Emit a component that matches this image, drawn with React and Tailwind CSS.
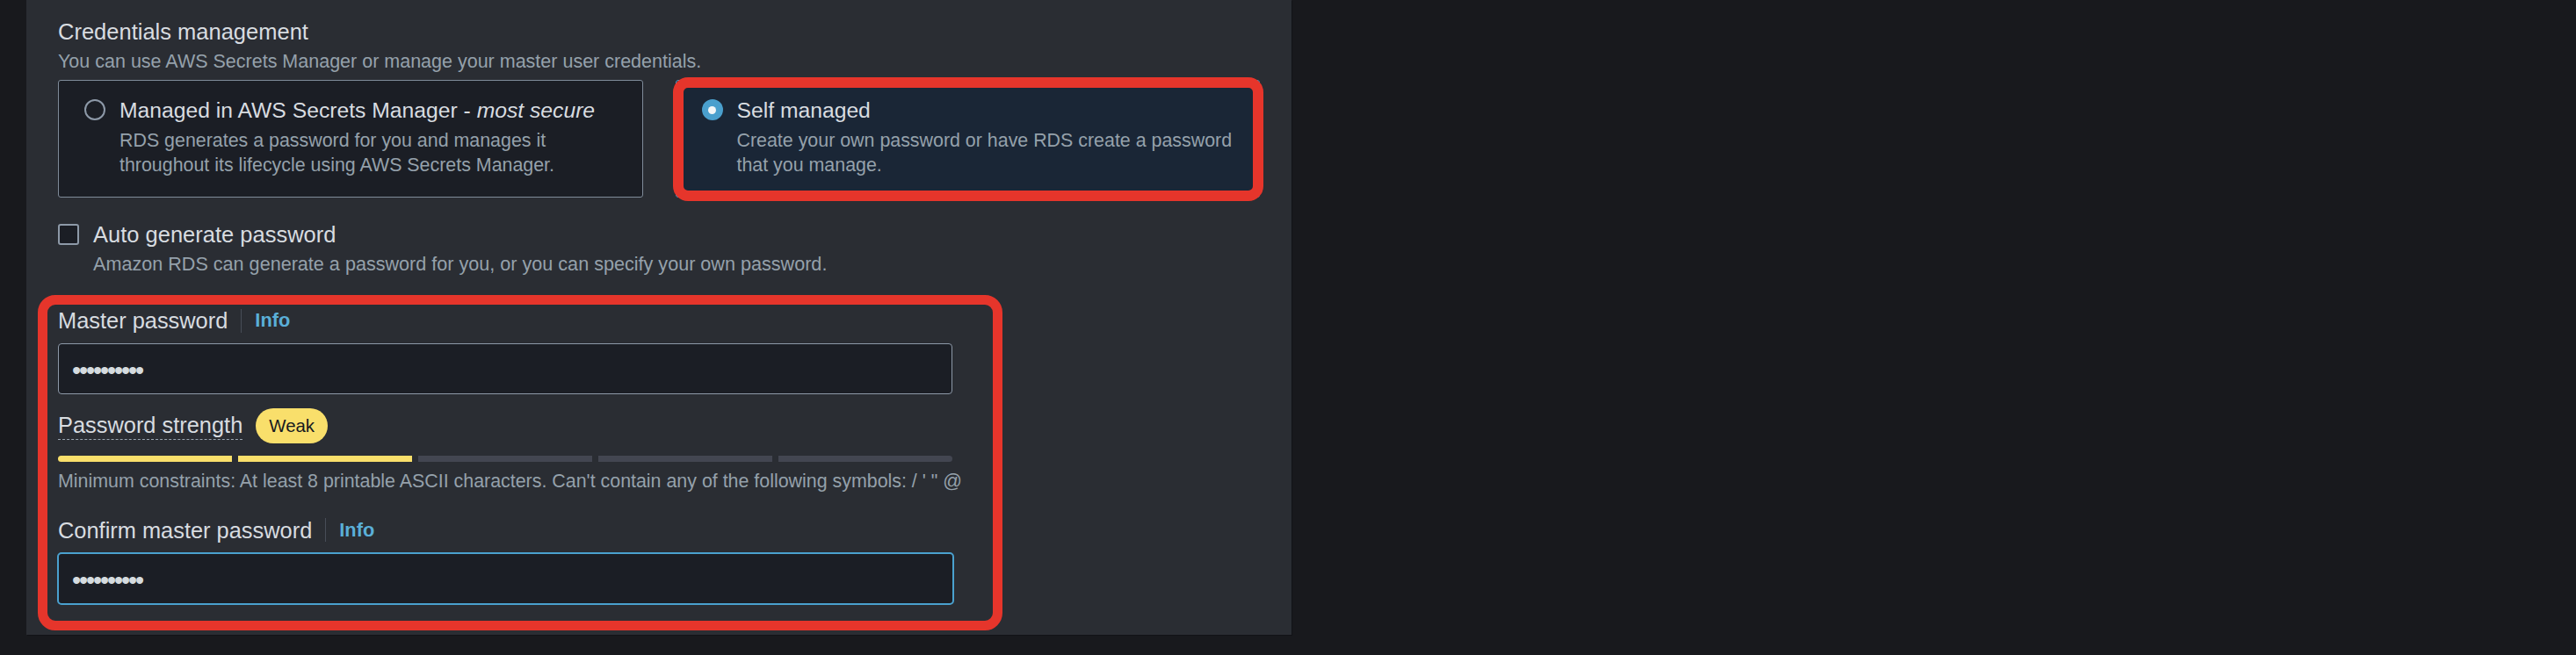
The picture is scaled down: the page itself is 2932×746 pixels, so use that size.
import React from 'react'

// Credentials management — RDS "Self managed" password section (dark theme)

const LABEL = 'text-[#d8dce0]'
const MUTED = 'text-[#95a1ab]'

function Radio({ checked }) {
  if (checked) {
    return (
      <span className="mt-[3px] flex h-[24px] w-[24px] shrink-0 items-center justify-center rounded-full bg-[#4a9fcd]">
        <span className="h-[9px] w-[9px] rounded-full bg-[#f4f6f7]" />
      </span>
    )
  }
  return <span className="mt-[3px] h-[24px] w-[24px] shrink-0 rounded-full border-2 border-[#8d99a8]" />
}

function Tile({ selected, title, description }) {
  return (
    <div
      className={`relative flex gap-[16px] rounded-[3px] border pl-[29px] pr-[16px] pt-[18.5px] pb-[22px] ${
        selected ? 'border-[#4a9fcd] bg-[#1a2636]' : 'border-[#7f8b99] bg-[#1b1e25]'
      }`}
    >
      <Radio checked={selected} />
      <div className="min-w-0">
        <div className={`text-[24.7px] leading-[32px] ${LABEL}`}>{title}</div>
        <p className={`mt-[4.7px] text-[21.4px] leading-[27.4px] ${MUTED}`}>{description}</p>
      </div>
      {selected && (
        // annotation outline drawn over the selected tile
        <span className="pointer-events-none absolute -top-[4px] -left-[4px] -right-[5px] -bottom-[5px] rounded-[17px] border-[12px] border-[#e6352b]" />
      )}
    </div>
  )
}

function FieldLabel({ children, className = '' }) {
  return (
    <div className={`flex h-[32px] items-center ${className}`}>
      <span className={`text-[25.4px] leading-[32px] ${LABEL}`}>{children}</span>
      <span className="mx-[15px] h-[27px] w-px bg-[#474d57]" />
      <span className="text-[21.8px] font-bold leading-[32px] text-[#5aafd8]">Info</span>
    </div>
  )
}

function Dots() {
  return (
    <span className="pt-[5px] text-[29px] leading-none tracking-[-2.15px] text-[#d5dbdf]">••••••••••</span>
  )
}

const BARS = [true, true, false, false, false]

export default function App() {
  return (
    <div className="h-[746px] w-[2932px] bg-[#18191d] font-['Liberation_Sans',Arial,sans-serif]">
      <section className="ml-[30px] w-[1440px] bg-[#2a2d33] px-[36px] pt-[19.5px] pb-[34px] shadow-[1px_1px_0_#111216]">
        <h2 className={`text-[25.5px] leading-[32px] ${LABEL}`}>Credentials management</h2>
        <p className={`mt-[4.8px] text-[21.5px] leading-[28px] ${MUTED}`}>
          You can use AWS Secrets Manager or manage your master user credentials.
        </p>

        <div className="mt-[6.7px] grid grid-cols-2 gap-[37px]">
          <Tile
            title={
              <>
                Managed in AWS Secrets Manager - <i>most secure</i>
              </>
            }
            description="RDS generates a password for you and manages it throughout its lifecycle using AWS Secrets Manager."
          />
          <Tile
            selected
            title="Self managed"
            description="Create your own password or have RDS create a password that you manage."
          />
        </div>

        {/* auto generate */}
        <div className="mt-[26.5px] flex gap-[16px]">
          <span className="mt-[3.5px] h-[24px] w-[24px] shrink-0 rounded-[3px] border-2 border-[#8d99a8] bg-[#1b1e25]" />
          <div>
            <div className={`text-[25.5px] leading-[32px] ${LABEL}`}>Auto generate password</div>
            <p className={`mt-[3.5px] text-[21.6px] leading-[27.4px] ${MUTED}`}>
              Amazon RDS can generate a password for you, or you can specify your own password.
            </p>
          </div>
        </div>

        {/* password fields */}
        <div className="relative mt-[35px] w-[1018px]">
          <FieldLabel>Master password</FieldLabel>
          <div className="mt-[9.5px] flex h-[58px] items-center rounded-[4px] border border-[#8d99a8] bg-[#1b1e25] pl-[15px]">
            <Dots />
          </div>

          <div className="mt-[16px] flex h-[40px] items-center gap-[15px]">
            <span className={`border-b border-dashed border-[#9aa5b0] text-[25.4px] leading-[32px] ${LABEL}`}>
              Password strength
            </span>
            <span className="flex h-[40px] items-center rounded-full bg-[#f9df6b] px-[15px] text-[20.4px] leading-none text-[#16191f]">
              Weak
            </span>
          </div>

          <div className="mt-[14px] flex gap-[7px]">
            {BARS.map((on, i) => (
              <span
                key={i}
                className={`h-[7px] flex-1 ${on ? 'bg-[#f9df6b]' : 'bg-[#434651]'} ${
                  i === 0 ? 'rounded-l-full' : ''
                } ${i === BARS.length - 1 ? 'rounded-r-full' : ''}`}
              />
            ))}
          </div>

          <p className={`mt-[9px] whitespace-nowrap text-[21.4px] leading-[27.4px] ${MUTED}`}>
            {"Minimum constraints: At least 8 printable ASCII characters. Can't contain any of the following symbols: / ' \" @"}
          </p>

          <FieldLabel className="mt-[25.6px]">Confirm master password</FieldLabel>
          <div className="-mx-[1.5px] mt-[9.4px] flex h-[59.4px] items-center rounded-[5px] border-2 border-[#4aa1cf] bg-[#1b1e25] pl-[15.5px]">
            <Dots />
          </div>

          {/* annotation outline over the password fields */}
          <span className="pointer-events-none absolute -top-[13.5px] -left-[23px] -right-[57px] -bottom-[29.3px] rounded-[20px] border-[11px] border-[#e6352b]" />
        </div>
      </section>
    </div>
  )
}
